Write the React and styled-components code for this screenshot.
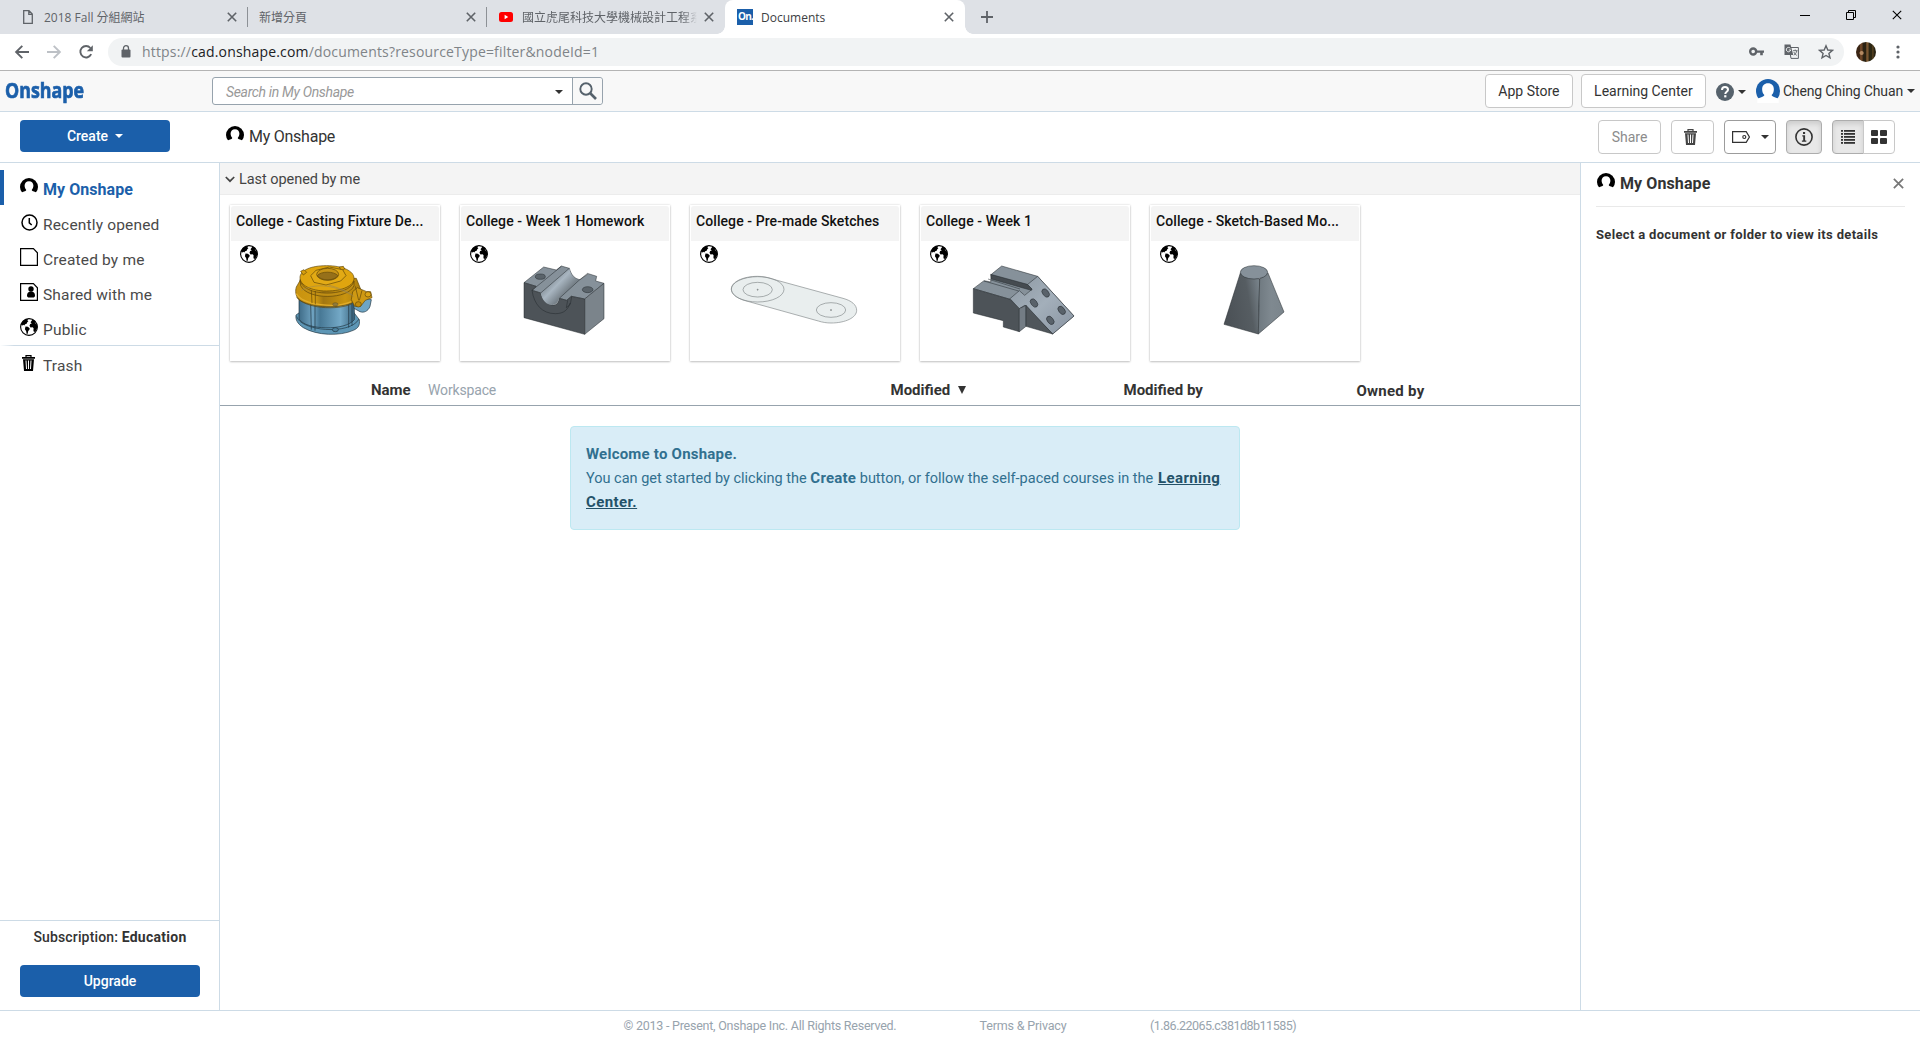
import React from "react";
import styled, { createGlobalStyle, css } from "styled-components";

const blue = "#1b5faa";
const line = "#cddbe6";
const ink = "#333333";

const GlobalStyle = createGlobalStyle`
  *, *::before, *::after { box-sizing: border-box; }
  html, body { margin: 0; padding: 0; background: #fff; }
  body { font-family: Roboto, "Noto Sans CJK TC", sans-serif; color: ${ink}; }
  svg { display: block; flex: none; }
`;

const Window = styled.div`
  width: 1920px;
  height: 1040px;
  display: flex;
  flex-direction: column;
  overflow: hidden;
  background: #fff;
`;

/* ---------- browser chrome ---------- */

const TabStrip = styled.div`
  height: 34px;
  flex: none;
  display: flex;
  background: #dee1e6;
  font-family: "Open Sans", "Noto Sans CJK TC", sans-serif;
  font-size: 12px;
  color: #5f6368;
`;

const TabBox = styled.div`
  width: ${(p) => p.$width}px;
  height: 34px;
  display: flex;
  align-items: center;
  padding-left: ${(p) => p.$indent}px;
  padding-right: 11px;
  position: relative;
  ${(p) =>
    p.$divider &&
    css`
      &::after {
        content: "";
        position: absolute;
        right: 0;
        top: 7px;
        width: 1px;
        height: 20px;
        background: #8d9196;
      }
    `}
  ${(p) =>
    p.$active &&
    css`
      background: #fff;
      border-radius: 8px 8px 0 0;
      color: #3c4043;
      &::before, &::after {
        content: "";
        position: absolute;
        bottom: 0;
        width: 8px;
        height: 8px;
      }
      &::before { left: -8px; background: radial-gradient(circle at 0 0, transparent 7.5px, #fff 8px); }
      &::after { right: -8px; background: radial-gradient(circle at 100% 0, transparent 7.5px, #fff 8px); }
    `}
`;

const TabTitle = styled.span`
  flex: 1;
  min-width: 0;
  margin-left: ${(p) => p.$gap}px;
  margin-right: ${(p) => (p.$fade ? 7 : 4)}px;
  white-space: nowrap;
  overflow: hidden;
  line-height: 20px;
  padding-top: 1px;
  ${(p) => p.$fade && css`mask-image: linear-gradient(to right, #000 92%, transparent 100%);`}
`;

const NewTab = styled.div`
  width: 44px;
  display: flex;
  align-items: center;
  justify-content: center;
`;

const WindowControls = styled.div`
  margin-left: auto;
  display: flex;
  align-items: center;
  gap: 36px;
  padding-right: 18px;
  height: 29px;
`;

const Toolbar = styled.div`
  height: 37px;
  flex: none;
  display: flex;
  align-items: center;
  padding: 0 14px 1px 14px;
  border-bottom: 1px solid #b4b4b4;
`;

const NavButtons = styled.div`
  width: 94px;
  display: flex;
  gap: 16px;
`;

const AddressBar = styled.div`
  width: 1736px;
  height: 28px;
  border-radius: 14px;
  background: #f1f3f4;
  display: flex;
  align-items: center;
  padding: 0 10px 0 13px;
`;

const Url = styled.span`
  margin-left: 11px;
  flex: 1;
  font-family: "Open Sans", sans-serif;
  font-size: 14px;
  letter-spacing: 0.173px;
  line-height: 20px;
  white-space: nowrap;
  color: #7f8488;
  b { font-weight: 400; color: #202124; }
`;

const AddressIcons = styled.div`
  display: flex;
  align-items: center;
  gap: 20px;
  svg:last-child { margin-left: -1px; }
`;

const Avatar = styled.div`
  width: 20px;
  height: 20px;
  margin-left: 12px;
  margin-right: 20px;
  border-radius: 50%;
  background:
    radial-gradient(circle at 28% 55%, #b58a62 0 8%, transparent 14%),
    linear-gradient(90deg, #3a2514 0 18%, #6b4426 22% 30%, #2b2212 36% 48%, #7a5630 54% 60%, #2c2613 66% 78%, #5a4422 84%, #2a2312 92%);
`;

/* ---------- application header ---------- */

const AppHeader = styled.div`
  height: 41px;
  flex: none;
  display: flex;
  align-items: center;
  background: #f8f8f8;
  border-bottom: 1px solid ${line};
`;

const Logo = styled.div`
  width: 207px;
  padding-left: 5px;
  margin-top: -5px;
  font-family: "Open Sans", sans-serif;
  font-weight: 700;
  font-size: 22px;
  line-height: 28px;
  color: ${blue};
  -webkit-text-stroke: 0.7px ${blue};
  span { display: inline-block; transform: scaleX(0.81); transform-origin: left; }
`;

const SearchBox = styled.div`
  width: 391px;
  height: 28px;
  margin-left: 5px;
  display: flex;
  border: 1px solid #97a3ad;
  border-radius: 3px;
  background: #fff;
`;

const SearchField = styled.div`
  flex: 1;
  display: flex;
  align-items: center;
  justify-content: space-between;
  padding: 1px 9px 0 13px;
  font-size: 14px;
  font-style: italic;
  letter-spacing: -0.34px;
  color: #999;
`;

const SearchButton = styled.div`
  width: 30px;
  display: flex;
  align-items: center;
  justify-content: center;
  border-left: 1px solid #97a3ad;
  background: #f8f8f8;
  border-radius: 0 3px 3px 0;
`;

const Caret = styled.span`
  width: 0;
  height: 0;
  flex: none;
  border: 4px solid transparent;
  border-top-color: ${(p) => p.$color || ink};
  border-bottom: 0;
`;

const HeaderActions = styled.div`
  margin-left: auto;
  display: flex;
  align-items: center;
  padding-right: 5px;
  font-size: 14px;
`;

const HeaderButton = styled.div`
  width: ${(p) => p.$width}px;
  height: 34px;
  margin-right: 8px;
  display: flex;
  align-items: center;
  justify-content: center;
  padding-bottom: 1px;
  border: 1px solid #c8c8c8;
  border-radius: 4px;
  background: #fff;
  white-space: nowrap;
`;

const HelpMenu = styled.div`
  display: flex;
  align-items: center;
  gap: 4px;
  margin-left: 2px;
  margin-top: 1px;
`;

const UserMenu = styled.div`
  display: flex;
  align-items: center;
  margin-left: 10px;
  letter-spacing: -0.14px;
  white-space: nowrap;
`;

const UserName = styled.div`
  margin: 0 4px 1px 3px;
`;

/* ---------- page bar ---------- */

const PageBar = styled.div`
  height: 51px;
  flex: none;
  display: flex;
  align-items: center;
  border-bottom: 1px solid ${line};
`;

const PrimaryButton = styled.div`
  width: ${(p) => p.$width}px;
  height: 32px;
  display: flex;
  align-items: center;
  justify-content: center;
  gap: 7px;
  border-radius: 4px;
  background: ${blue};
  color: #fff;
  font-size: 14px;
  font-weight: 500;
`;

const CreateSlot = styled.div`
  width: 226px;
  padding-left: 20px;
  margin-top: -2px;
`;

const Crumb = styled.div`
  display: flex;
  align-items: center;
  gap: 5px;
  margin-top: -1px;
  font-size: 16px;
  letter-spacing: -0.25px;
  svg { margin-top: -3px; }
`;

const PageTools = styled.div`
  margin-left: auto;
  padding-right: 25px;
  display: flex;
  align-items: center;
`;

const ToolButton = styled.div`
  width: ${(p) => p.$width}px;
  height: 34px;
  margin-left: ${(p) => p.$gap ?? 10}px;
  display: flex;
  align-items: center;
  justify-content: center;
  gap: 11px;
  padding-right: ${(p) => p.$nudge ?? 0}px;
  font-size: 14px;
  color: #8c8c8c;
  border: 1px solid ${(p) => (p.$strong ? "#9c9c9c" : "#c8c8c8")};
  border-radius: ${(p) => p.$corners || "4px"};
  background: #fff;
  ${(p) =>
    p.$pressed &&
    css`
      background: #e8e8e8;
      border-color: #adadad;
      box-shadow: inset 0 3px 5px rgba(0, 0, 0, 0.12);
    `}
`;

/* ---------- body ---------- */

const Body = styled.div`
  height: 847px;
  flex: none;
  display: flex;
`;

const Sidebar = styled.div`
  width: 220px;
  display: flex;
  flex-direction: column;
  border-right: 1px solid ${line};
  padding-top: 7px;
`;

const NavItem = styled.div`
  height: 35px;
  display: flex;
  align-items: center;
  padding-left: 20px;
  font-size: 15.5px;
  letter-spacing: 0.17px;
  color: #4a4a4a;
  ${(p) =>
    p.$active &&
    css`
      padding-left: 16px;
      border-left: 4px solid ${blue};
      color: ${blue};
      font-weight: 700;
      font-size: 16px;
      letter-spacing: 0.05px;
    `}
`;

const NavIcon = styled.span`
  width: 18px;
  margin-right: 5px;
  margin-top: ${(p) => p.$lift ?? -1}px;
  display: flex;
  justify-content: ${(p) => (p.$start ? "flex-start" : "center")};
  padding-left: ${(p) => (p.$start ? 2 : 0)}px;
`;

const NavText = styled.span`
  padding-top: 4px;
`;

const NavRule = styled.div`
  height: 1px;
  background: linear-gradient(90deg, #fff, ${line} 14px);
`;

const Plan = styled.div`
  margin-top: auto;
  height: 90px;
  border-top: 1px solid ${line};
  display: flex;
  flex-direction: column;
  align-items: center;
  padding-top: 7px;
  padding-left: 1px;
  gap: 18px;
`;

const PlanText = styled.div`
  font-size: 14px;
  font-weight: 500;
  line-height: 19px;
  letter-spacing: 0.15px;
  b { font-weight: 700; letter-spacing: 0.27px; }
`;

const Main = styled.div`
  width: 1360px;
`;

const SectionBar = styled.div`
  height: 32px;
  display: flex;
  align-items: center;
  gap: 4px;
  padding: 2px 0 0 5px;
  background: #f4f4f4;
  border-bottom: 1px solid #ececec;
  font-size: 14.5px;
  letter-spacing: -0.05px;
  color: #444;
`;

const Cards = styled.div`
  display: flex;
  gap: 20px;
  padding: 10px 10px 0;
`;

const CardBox = styled.div`
  width: 210px;
  height: 156px;
  padding: 1px;
  background: #fff;
  box-shadow: 0 0 2px rgba(0, 0, 0, 0.16), 0 1px 2px rgba(0, 0, 0, 0.2);
`;

const CardTitle = styled.div`
  height: 35px;
  padding: 0 5px 5px;
  display: flex;
  align-items: center;
  border-radius: 3px 3px 0 0;
  background: #f4f4f4;
  font-size: 14px;
  font-weight: 500;
  letter-spacing: 0.08px;
  color: #111;
  white-space: nowrap;
`;

const CardBody = styled.div`
  position: relative;
  height: 119px;
`;

const CardBadge = styled.div`
  position: absolute;
  left: 9px;
  top: 4px;
`;

const Thumb = styled.svg`
  position: absolute;
  left: -1px;
  top: 0;
`;

const TableHead = styled.div`
  height: 45px;
  display: grid;
  grid-template-columns: 151px 57px 462.5px 233px 233px 1fr;
  align-items: center;
  padding-top: 14px;
  border-bottom: 1px solid #97a3ad;
  font-size: 15px;
  font-weight: 700;
  white-space: nowrap;
`;

const HeadCell = styled.div`
  grid-column: ${(p) => p.$col};
  display: flex;
  align-items: center;
  gap: 8px;
  letter-spacing: ${(p) => p.$spacing || 0}px;
  padding-top: ${(p) => p.$drop || 0}px;
  ${(p) =>
    p.$muted &&
    css`
      font-size: 14px;
      font-weight: 400;
      letter-spacing: -0.15px;
      color: #97a3ad;
    `}
`;

const SortMark = styled.span`
  border: 4px solid transparent;
  border-top: 8px solid ${ink};
  border-bottom: 0;
`;

const Notice = styled.div`
  width: 670px;
  height: 104px;
  margin: 20px 0 0 350px;
  padding: 16px 15px;
  background: #d9edf7;
  border: 1px solid #bce8f1;
  border-radius: 4px;
  color: #31708f;
  font-size: 14.5px;
  line-height: 24px;
  b { font-size: 15px; line-height: 16px; font-weight: 700; letter-spacing: 0.22px; }
`;

const NoticeLink = styled.a`
  font-size: 15px;
  line-height: 16px;
  font-weight: 700;
  letter-spacing: 0.42px;
  margin-left: 1px;
  color: #245269;
  text-decoration: underline;
`;

const Details = styled.div`
  flex: 1;
  border-left: 1px solid ${line};
  padding: 0 15px;
`;

const DetailsHead = styled.div`
  height: 44px;
  display: flex;
  align-items: center;
  gap: 5px;
  padding: 0 1px 3px;
  border-bottom: 1px solid #e9e9e9;
  font-size: 16px;
  font-weight: 700;
  letter-spacing: 0.1px;
  > svg:first-child { margin-top: -2px; }
  > svg:last-child { margin-left: auto; margin-top: 1px; }
`;

const DetailsHint = styled.div`
  padding-top: 19px;
  font-size: 13px;
  line-height: 18px;
  font-weight: 700;
  letter-spacing: 0.33px;
  white-space: nowrap;
`;

const Footer = styled.div`
  height: 30px;
  flex: none;
  display: flex;
  align-items: center;
  border-top: 1px solid ${line};
  padding: 0 0 1px 623.5px;
  font-size: 12.5px;
  color: #97a3ad;
  white-space: nowrap;
`;

const FooterText = styled.span`
  width: ${(p) => p.$width}px;
  letter-spacing: ${(p) => p.$spacing}px;
`;

/* ---------- icons ---------- */

const Close = ({ size = 10, color = "#5f6368", weight = 1.6 }) => (
  <svg width={size} height={size} viewBox="0 0 10 10">
    <path d="M.8 .8 9.2 9.2M9.2 .8 .8 9.2" stroke={color} strokeWidth={weight} />
  </svg>
);

const PersonIcon = ({ size = 18, color = "#000" }) => (
  <svg width={size} height={size} viewBox="0 0 18 18">
    <circle cx="9" cy="9" r="9" fill={color} />
    <path d="M9 3.200c-2.800 0-4.400 1.900-4.400 4.400 0 1.900.7 3.400 1.700 4.400-.3.8-1 1.300-2.300 1.600L1 14.800V18h16v-3.200l-3-1.200c-1.300-.3-2-.8-2.300-1.600 1-1 1.700-2.500 1.700-4.400 0-2.500-1.600-4.400-4.400-4.400z" fill="#fff" />
  </svg>
);

const GlobeIcon = () => (
  <svg width="18" height="18" viewBox="0 0 18 18">
    <circle cx="9" cy="9" r="8.400" fill="#fff" stroke="#000" strokeWidth="1.100" />
    <path d="M1 6.500C1.800 3.800 4 1.700 6.400 1l1.800.2-.8 1.300 1 .8-1.200 1-.3 1.300-1.700.6-1 1.200-.9-.6-.6.7L2 7.200zM5.500 8.500l2.300.3 1.900 1.500-.3 1.500-1.200 1.300-.5 2.600-1 .4-.6-3.200-1.200-1.600zM10.500 4.200l1.700-2.200 1.600-.2 2.300 2.500-1.400.3.900.8 1.300 1 .5 2-.4 2.200-1.600 2.800-1.400.6-.6-1.500.2-2.200-1-1-2.100.1-1-1.600.7-1.800 1.600-.6z" fill="#000" />
  </svg>
);

const TrashIcon = ({ color = "#000" }) => (
  <svg width="13" height="16" viewBox="0 0 13 16">
    <path d="M4 2V.7h5V2" fill="none" stroke={color} strokeWidth="1.200" />
    <path d="M0 2h13v1.700H0zM1 4.300h11L11 16H2z" fill={color} />
    <path d="M4 5.500l.5 8.500M6.500 5.500v8.500M9 5.500l-.5 8.500" stroke="#fff" strokeWidth="1" />
  </svg>
);

const ClockIcon = () => (
  <svg width="17" height="17" viewBox="0 0 17 17" fill="none" stroke="#000" strokeWidth="1.500">
    <circle cx="8.500" cy="8.500" r="7.500" />
    <path d="M8.300 4v4.800l2.400 2.200" />
  </svg>
);

const SheetIcon = ({ person }) => (
  <svg width="18" height="18" viewBox="0 0 18 18">
    <path d="M.600.600h12.800L17.400 4.800v12.600H.600z" fill="#fff" stroke="#000" strokeWidth="1.200" />
    {person && (
      <g>
        <circle cx="11" cy="6" r="2.700" />
        <path d="M7 12.500c0-2.700 1.600-3.900 4-3.900s4 1.200 4 3.900c0 1.500-1 2-2 2H9c-1 0-2-.5-2-2z" />
      </g>
    )}
  </svg>
);

const TabFile = () => (
  <svg width="10" height="14" viewBox="0 0 10 14" fill="none" stroke="#5f6368" strokeWidth="1.300">
    <path d="M.700.700h5.300l3.300 3.300v9.300H.700zM5.800.900v3.400h3.400" />
  </svg>
);

const YoutubeIcon = () => (
  <svg width="14" height="10" viewBox="0 0 14 10">
    <rect width="14" height="10" rx="2.500" fill="#f00" />
    <path d="M5.600 2.800v4.400L9.200 5z" fill="#fff" />
  </svg>
);

const Favicon = styled.span`
  width: 16px;
  height: 16px;
  flex: none;
  background: ${blue};
  color: #fff;
  font: 700 10px/15px "Open Sans", sans-serif;
  letter-spacing: -0.8px;
  padding-left: 1px;
  white-space: nowrap;
`;

const LockIcon = () => (
  <svg width="10" height="13" viewBox="0 0 10 13">
    <rect x=".5" y="4.500" width="9" height="8" rx="1" fill="#5f6368" />
    <path d="M2.500 5V3.200a2.500 2.500 0 0 1 5 0V5" fill="none" stroke="#5f6368" strokeWidth="1.300" />
  </svg>
);

/* ---------- card pictures ---------- */

const Casting = () => (
  <Thumb width="210" height="119" viewBox="690 214 630 357" strokeLinejoin="round">
    <defs>
      <linearGradient id="steel" x1="0" x2="1">
        <stop offset="0" stopColor="#3f6c88" />
        <stop offset=".25" stopColor="#6fa3c1" />
        <stop offset=".38" stopColor="#477895" />
        <stop offset=".75" stopColor="#74a9c7" />
        <stop offset="1" stopColor="#3b6680" />
      </linearGradient>
      <linearGradient id="brass" x1="0" x2="1">
        <stop offset="0" stopColor="#c8920f" />
        <stop offset=".3" stopColor="#d09a12" />
        <stop offset=".42" stopColor="#a27711" />
        <stop offset=".75" stopColor="#c9940f" />
        <stop offset="1" stopColor="#a87b0d" />
      </linearGradient>
    </defs>
    <g stroke="#1f3440" strokeWidth="2">
      <path d="M888 436c-2 14 4 26 22 38 40 24 110 26 150 8 16-7 20-16 18-32l-20-26H905z" fill="#5d96b5" />
      <path d="M897 380v68c20 34 140 36 166 2v-66z" fill="url(#steel)" />
      <path d="M890 440c10 44 160 58 187 8" fill="none" />
      <path d="M932 405l2 75M945 407v76M1046 402v72M1056 398v70" fill="none" />
      <path d="M1062 392l20-10 32 8-4 20c-6 16-20 20-30 16l-18-10z" fill="#6ea5c4" />
      <ellipse cx="1006" cy="480" rx="9" ry="6" fill="#4d829f" />
    </g>
    <g stroke="#5f4608" strokeWidth="2">
      <path d="M889 352c-4 12-2 26 6 36 24 22 114 36 168 8l22-30-16-40H904z" fill="url(#brass)" />
      <path d="M889 372c20 36 120 44 165 24" fill="none" stroke="#e0ac2a" strokeWidth="4" />
      <path d="M890 382c22 34 122 42 166 20" fill="none" />
      <path d="M900 324c0-22 32-36 80-36s82 16 82 38-34 38-82 38-80-18-80-40z" fill="#dfa50f" />
      <path d="M900 330c6 52 150 54 162 4v14c-16 42-140 44-160 0z" fill="#c08e14" />
      <path d="M902 305l10-5 8 8-10 8zM1018 292l12-2 4 8-10 6z" fill="#d79f0e" />
      <path d="M932 318l16-16 40-10 40 8 10 18-16 16-44 12-36-8z" fill="#e2aa15" />
      <ellipse cx="983" cy="314" rx="33" ry="18" fill="#c99518" />
      <path d="M952 318c10-14 50-14 62 0-10 16-50 18-62 0z" fill="#96701a" />
      <path d="M1058 366l14-12 28 12 12 0 4 18-20 8-14 18-18 0-10-20z" fill="#cf9913" />
      <ellipse cx="1104" cy="374" rx="9" ry="8" fill="#dba416" />
      <ellipse cx="1075" cy="404" rx="9" ry="8" fill="#c08a0b" />
      <path d="M934 362l2 38M946 364v40M1066 350l10 42M1086 362l-8 30" fill="none" />
    </g>
    <path d="M904 362c40-20 90-20 150 14M985 346c30 8 60 18 78 36" fill="none" stroke="#95845a" strokeWidth="1.500" />
    <ellipse cx="1006" cy="404" rx="8" ry="5" fill="#8f7a3a" stroke="#3a3a2a" />
  </Thumb>
);

const Homework = () => (
  <Thumb width="210" height="119" viewBox="60 154 630 357" stroke="#23282d" strokeWidth="1.500" strokeLinejoin="round">
    <defs>
      <linearGradient id="groove" gradientUnits="userSpaceOnUse" x1="322" y1="264" x2="384" y2="324">
        <stop offset="0" stopColor="#747e86" />
        <stop offset=".42" stopColor="#a9b6c1" />
        <stop offset=".8" stopColor="#78828a" />
      </linearGradient>
    </defs>
    <path d="M252 279l59-47 38 9 15-12 24 7c6 22 18 32 32 34l25-18 25 8-3 14 25 7-58 47L394 320 380 332 358 326 302 310 276 302 288 290z" fill="#86919a" />
    <path d="M434 328l58-47v106l-58 47z" fill="#7b848b" />
    <path d="M252 279l36 11-12 12 26 8c8 24 22 36 38 36 8 0 14-4 18-20l22 6 14-12 40 8v106l-182-50z" fill="#4d5358" />
    <path d="M302 310l86-74c4 20 14 32 29 36l-59 54c-4 14-12 20-20 20-18 0-32-14-36-36z" fill="url(#groove)" stroke="none" />
    <path d="M302 310l86-74M358 326l59-54 27-22M276 302c6 42 30 70 70 70 26 0 38-12 44-32M395 320l-4 24-12 10 4-22M276 302l88-72" fill="none" />
    <ellipse cx="301" cy="261" rx="15" ry="8" fill="#5a636a" />
    <ellipse cx="443" cy="300" rx="16" ry="9" fill="#5a636a" />
  </Thumb>
);

const Sketch = () => (
  <Thumb width="210" height="119" viewBox="750 155 630 357" stroke="#83898b" strokeWidth="2" fill="none">
    <path d="M874 299c0-21 35-38 79-38 14 0 30 3 44 8l212 58c26 7 41 20 41 36 0 22-34 38-77 38-12 0-26-2-38-6L912 333c-24-8-38-20-38-34z" fill="#e9eeee" />
    <ellipse cx="953" cy="300" rx="79" ry="38" />
    <ellipse cx="953" cy="301" rx="44" ry="22" />
    <ellipse cx="1173" cy="362" rx="44" ry="22" />
    <circle cx="953" cy="301" r="1.500" fill="#555" />
    <circle cx="1173" cy="362" r="1.500" fill="#555" />
  </Thumb>
);

const WeekOne = () => (
  <Thumb width="210" height="119" viewBox="60 154 630 357" stroke="#23282d" strokeWidth="1.500" strokeLinejoin="round">
    <defs>
      <linearGradient id="slope" x1="0" y1="0" x2="1" y2="1">
        <stop offset="0" stopColor="#8d98a2" />
        <stop offset=".5" stopColor="#a3afba" />
        <stop offset="1" stopColor="#8893a0" />
      </linearGradient>
    </defs>
    <path d="M274 254l31-25 108 31 109 119-64 54-80-76-18-4-30-24-110-32 32-24 20 4z" fill="#86919a" />
    <path d="M413 260l109 119-64 54-84-86-16 10-28-30 28-24 16 14 22-18-14-14z" fill="url(#slope)" />
    <path d="M272 254l110 30 14 14-2 4-120-34z" fill="#454b50" />
    <path d="M252 274l104 30M264 268l96 30" fill="none" />
    <path d="M220 297l110 32 28 28v69l-48-14v-19l-90-23z" fill="#4d5358" />
    <path d="M358 357l20-10v63l-20 16z" fill="#747d85" />
    <path d="M378 347l80 86-80-23z" fill="#50565b" />
    {[[437, 310], [402, 340], [485, 362], [451, 392]].map(([x, y]) => (
      <ellipse key={x} cx={x} cy={y} rx="9" ry="14" transform={`rotate(-38 ${x} ${y})`} fill="#59626a" />
    ))}
  </Thumb>
);

const Loft = () => (
  <Thumb width="210" height="119" viewBox="750 154 630 357" stroke="#23282d" strokeWidth="1.500" strokeLinejoin="round">
    <defs>
      <linearGradient id="front" x1="0" y1=".3" x2="1" y2="0">
        <stop offset="0" stopColor="#4c5257" />
        <stop offset=".6" stopColor="#565d62" />
        <stop offset="1" stopColor="#7e8991" />
      </linearGradient>
      <linearGradient id="side" x1="0" x2="1">
        <stop offset="0" stopColor="#6f7980" />
        <stop offset=".5" stopColor="#7f8990" />
        <stop offset="1" stopColor="#7b858c" />
      </linearGradient>
    </defs>
    <path d="M1021 250l-49 154 103 29 4-165z" fill="url(#front)" />
    <path d="M1104 250l48 117-77 66 4-165z" fill="url(#side)" />
    <ellipse cx="1062" cy="248" rx="41" ry="20" fill="#86919a" />
  </Thumb>
);

const cards = [
  ["College - Casting Fixture De...", Casting],
  ["College - Week 1 Homework", Homework],
  ["College - Pre-made Sketches", Sketch],
  ["College - Week 1", WeekOne],
  ["College - Sketch-Based Mo...", Loft],
];

const navItems = [
  ["Recently opened", <ClockIcon key="i" />],
  ["Created by me", <SheetIcon key="i" />],
  ["Shared with me", <SheetIcon key="i" person />],
  ["Public", <GlobeIcon key="i" />],
];

export default function App() {
  return (
    <Window>
      <GlobalStyle />
      <TabStrip>
        <TabBox $width={248} $indent={23} $divider>
          <TabFile />
          <TabTitle $gap={11}>2018 Fall 分組網站</TabTitle>
          <Close />
        </TabBox>
        <TabBox $width={239} $indent={11} $divider>
          <TabTitle $gap={0}>新增分頁</TabTitle>
          <Close />
        </TabBox>
        <TabBox $width={238} $indent={12}>
          <YoutubeIcon />
          <TabTitle $gap={9} $fade>國立虎尾科技大學機械設計工程系</TabTitle>
          <Close />
        </TabBox>
        <TabBox $width={240} $indent={12} $active>
          <Favicon>On.</Favicon>
          <TabTitle $gap={8}>Documents</TabTitle>
          <Close />
        </TabBox>
        <NewTab>
          <svg width="12" height="12" viewBox="0 0 12 12">
            <path d="M6 0v12M0 6h12" stroke="#5f6368" strokeWidth="1.800" />
          </svg>
        </NewTab>
        <WindowControls>
          <svg width="10" height="10" viewBox="0 0 10 10"><path d="M0 5.500h10" stroke="#000" /></svg>
          <svg width="10" height="10" viewBox="0 0 10 10" fill="none" stroke="#000">
            <path d="M.5 2.500h7v7h-7zM2.500 2.500v-2h7v7h-2" />
          </svg>
          <Close color="#000" weight={1.1} />
        </WindowControls>
      </TabStrip>

      <Toolbar>
        <NavButtons>
          {["#5f6368", "#bdc1c6"].map((color, i) => (
            <svg key={color} width="16" height="16" viewBox="0 0 16 16" fill="none" stroke={color} strokeWidth="1.900" transform={i ? "scale(-1 1)" : undefined}>
              <path d="M15 8H2.500M8.300 1.800 2.100 8l6.200 6.200" />
            </svg>
          ))}
          <svg width="16" height="16" viewBox="0 0 16 16">
            <path d="M13.200 10.200A5.700 5.700 0 1 1 12.400 4" fill="none" stroke="#5f6368" strokeWidth="1.900" />
            <path d="M14.800 1.200v6H8.800z" fill="#5f6368" />
          </svg>
        </NavButtons>
        <AddressBar>
          <LockIcon />
          <Url>https://<b>cad.onshape.com</b>/documents?resourceType=filter&amp;nodeId=1</Url>
          <AddressIcons>
            <svg width="15" height="10" viewBox="0 0 15 10">
              <circle cx="4.200" cy="4.500" r="3" fill="none" stroke="#5f6368" strokeWidth="2.400" />
              <path d="M7 3.400h8v2.400h-1.200v2.500h-2.600V5.800H7z" fill="#5f6368" />
            </svg>
            <svg width="15" height="15" viewBox="0 0 15 15">
              <path d="M5 3.500h9.400v10.900H7z" fill="#f1f3f4" stroke="#5f6368" strokeWidth="1" />
              <path d="M.500.500h6l2.800 10.500H.500z" fill="#5f6368" />
              <path d="M6.300 4.300A2.200 2.200 0 1 0 6.700 6H4.800" fill="none" stroke="#f1f3f4" strokeWidth="1" />
              <path d="M9 6.700h4.500M11.200 5.500v1.200M12.800 6.700c-.3 2-1.500 3.500-3 4.500M9.800 8c.6 1.500 1.700 2.700 3 3.400" fill="none" stroke="#5f6368" strokeWidth=".9" />
            </svg>
            <svg width="16" height="16" viewBox="0 0 16 16">
              <path d="M8 1.800l1.800 4.200 4.600.4-3.500 3 1.100 4.500L8 11.500l-4 2.400 1.100-4.500-3.500-3 4.600-.4z" fill="none" stroke="#5f6368" strokeWidth="1.400" />
            </svg>
          </AddressIcons>
        </AddressBar>
        <Avatar />
        <svg width="4" height="14" viewBox="0 0 4 14" fill="#5f6368">
          <circle cx="2" cy="2" r="1.600" />
          <circle cx="2" cy="7" r="1.600" />
          <circle cx="2" cy="12" r="1.600" />
        </svg>
      </Toolbar>

      <AppHeader>
        <Logo><span>Onshape</span></Logo>
        <SearchBox>
          <SearchField>
            Search in My Onshape
            <Caret />
          </SearchField>
          <SearchButton>
            <svg width="18" height="18" viewBox="0 0 18 18" fill="none" stroke="#56626c">
              <circle cx="7" cy="7" r="5.700" strokeWidth="1.900" />
              <path d="M11 11l6 6" strokeWidth="2.600" />
            </svg>
          </SearchButton>
        </SearchBox>
        <HeaderActions>
          <HeaderButton $width={88}>App Store</HeaderButton>
          <HeaderButton $width={125}>Learning Center</HeaderButton>
          <HelpMenu>
            <svg width="18" height="18" viewBox="0 0 18 18">
              <circle cx="9" cy="9" r="9" fill="#56626c" />
              <path d="M6 7c0-1.800 1.200-2.900 3-2.900s3 1.100 3 2.600c0 2.100-2.700 2-2.700 4.200" fill="none" stroke="#fff" strokeWidth="2" />
              <rect x="8.200" y="12.200" width="2.200" height="2.200" fill="#fff" />
            </svg>
            <Caret />
          </HelpMenu>
          <UserMenu>
            <PersonIcon size={24} color={blue} />
            <UserName>Cheng Ching Chuan</UserName>
            <Caret />
          </UserMenu>
        </HeaderActions>
      </AppHeader>

      <PageBar>
        <CreateSlot>
          <PrimaryButton $width={150}>
            Create
            <Caret $color="#fff" />
          </PrimaryButton>
        </CreateSlot>
        <Crumb>
          <PersonIcon />
          My Onshape
        </Crumb>
        <PageTools>
          <ToolButton $width={63}>Share</ToolButton>
          <ToolButton $width={43} $nudge={4}><TrashIcon color="#444" /></ToolButton>
          <ToolButton $width={52} $strong>
            <svg width="18" height="12" viewBox="0 0 18 12" fill="none" stroke={ink} strokeWidth="1.200">
              <path d="M.600.600h13.600l3.200 5.400-3.200 5.400H.600z" />
              <circle cx="12.300" cy="6" r="1.500" />
            </svg>
            <Caret />
          </ToolButton>
          <ToolButton $width={36} $pressed>
            <svg width="18" height="18" viewBox="0 0 18 18">
              <circle cx="9" cy="9" r="8.100" fill="none" stroke={ink} strokeWidth="1.600" />
              <path d="M7.300 7.300h2.800v5.200h1.200v1.200H6.900v-1.200H8.200V8.500h-.9zM8 4h2.100v2H8z" fill={ink} />
            </svg>
          </ToolButton>
          <ToolButton $width={32} $pressed $corners="4px 0 0 4px">
            <svg width="14" height="14" viewBox="0 0 14 14" fill={ink}>
              {[0, 3, 6, 9, 12].map((y) => (
                <g key={y}>
                  <rect y={y} width="2" height="1.800" />
                  <rect x="3" y={y} width="11" height="1.800" />
                </g>
              ))}
            </svg>
          </ToolButton>
          <ToolButton $width={32} $gap={-1} $corners="0 4px 4px 0">
            <svg width="16" height="14" viewBox="0 0 16 14" fill={ink}>
              <rect width="7" height="6" rx="1" />
              <rect x="9" width="7" height="6" rx="1" />
              <rect y="8" width="7" height="6" rx="1" />
              <rect x="9" y="8" width="7" height="6" rx="1" />
            </svg>
          </ToolButton>
        </PageTools>
      </PageBar>

      <Body>
        <Sidebar>
          <NavItem $active>
            <NavIcon><PersonIcon /></NavIcon>
            <NavText>My Onshape</NavText>
          </NavItem>
          {navItems.map(([label, icon]) => (
            <NavItem key={label}>
              <NavIcon>{icon}</NavIcon>
              <NavText>{label}</NavText>
            </NavItem>
          ))}
          <NavRule />
          <NavItem>
            <NavIcon $lift={-1} $start><TrashIcon /></NavIcon>
            <NavText>Trash</NavText>
          </NavItem>
          <Plan>
            <PlanText>Subscription: <b>Education</b></PlanText>
            <PrimaryButton $width={180}>Upgrade</PrimaryButton>
          </Plan>
        </Sidebar>

        <Main>
          <SectionBar>
            <svg width="10" height="7" viewBox="0 0 10 7" fill="none" stroke="#444" strokeWidth="1.700">
              <path d="M.8 1 5 5.200 9.200 1" />
            </svg>
            Last opened by me
          </SectionBar>
          <Cards>
            {cards.map(([title, Picture]) => (
              <CardBox key={title}>
                <CardTitle>{title}</CardTitle>
                <CardBody>
                  <Picture />
                  <CardBadge><GlobeIcon /></CardBadge>
                </CardBody>
              </CardBox>
            ))}
          </Cards>
          <TableHead>
            <HeadCell $col={2}>Name</HeadCell>
            <HeadCell $col={3} $muted>Workspace</HeadCell>
            <HeadCell $col={4}>Modified <SortMark /></HeadCell>
            <HeadCell $col={5}>Modified by</HeadCell>
            <HeadCell $col={6} $spacing={0.25} $drop={2}>Owned by</HeadCell>
          </TableHead>
          <Notice>
            <b>Welcome to Onshape.</b>
            <br />
            You can get started by clicking the <b>Create</b> button, or follow the self-paced courses in the{" "}
            <NoticeLink>Learning Center.</NoticeLink>
          </Notice>
        </Main>

        <Details>
          <DetailsHead>
            <PersonIcon />
            My Onshape
            <Close size={11} color="#777" />
          </DetailsHead>
          <DetailsHint>Select a document or folder to view its details</DetailsHint>
        </Details>
      </Body>

      <Footer>
        <FooterText $width={356} $spacing={-0.235}>© 2013 - Present, Onshape Inc. All Rights Reserved.</FooterText>
        <FooterText $width={170.5} $spacing={-0.17}>Terms &amp; Privacy</FooterText>
        <FooterText $spacing={-0.5}>(1.86.22065.c381d8b11585)</FooterText>
      </Footer>
    </Window>
  );
}
